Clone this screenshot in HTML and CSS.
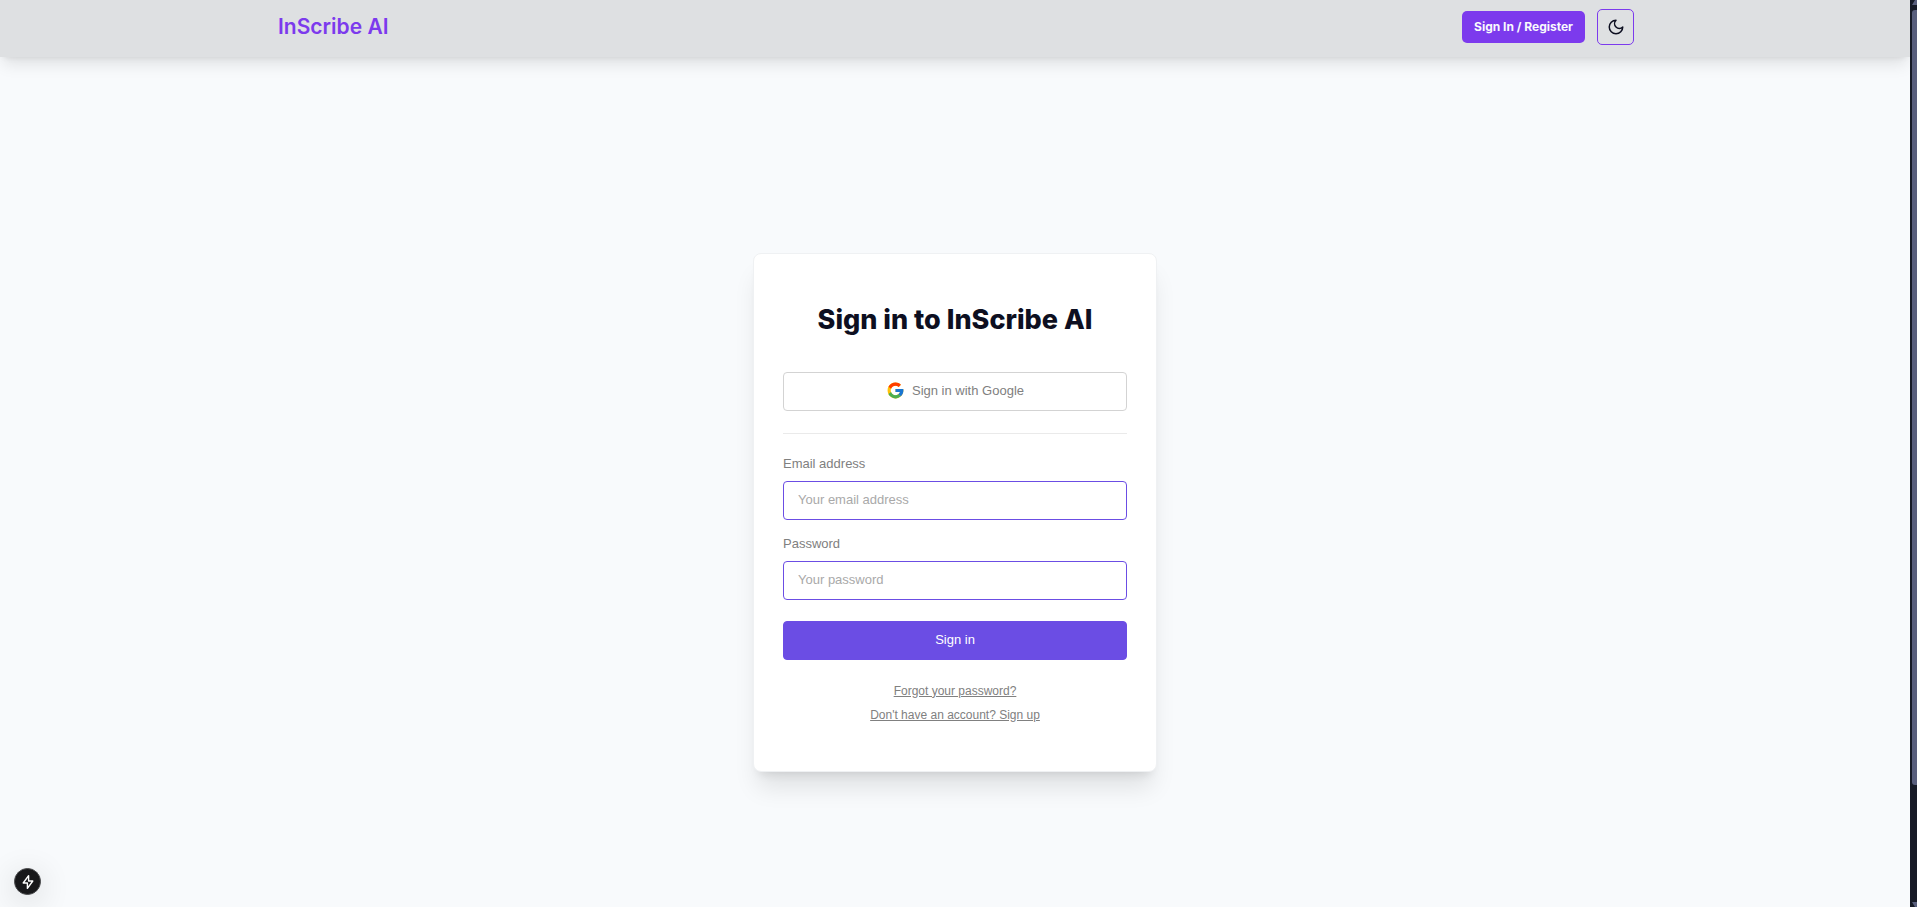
FILE: index.html
```html
<!DOCTYPE html>
<html lang="en">
<head>
<meta charset="utf-8">
<title>InScribe AI</title>
<link rel="stylesheet" href="styles.css">
</head>
<body>
<div class="page">
  <header class="header">
    <div class="header-inner">
      <a class="logo" href="#">InScribe AI</a>
      <nav class="actions">
        <a class="register" href="#">Sign In / Register</a>
        <button class="theme" type="button" aria-label="Toggle theme">
          <svg width="18" height="18" viewBox="0 0 24 24" fill="none" stroke="currentColor" stroke-width="2" stroke-linecap="round" stroke-linejoin="round"><path d="M12 3a6 6 0 0 0 9 9 9 9 0 1 1-9-9Z"/></svg>
        </button>
      </nav>
    </div>
  </header>
  <main class="main">
    <section class="card">
      <h1 class="title">Sign in to InScribe AI</h1>
      <form class="form">
        <button class="control google" type="button">
          <svg width="19" height="19" viewBox="0 0 48 48"><path fill="#FFC107" d="M43.611 20.083H42V20H24v8h11.303c-1.649 4.657-6.08 8-11.303 8-6.627 0-12-5.373-12-12s5.373-12 12-12c3.059 0 5.842 1.154 7.961 3.039l5.657-5.657C34.046 6.053 29.268 4 24 4 12.955 4 4 12.955 4 24s8.955 20 20 20 20-8.955 20-20c0-1.341-.138-2.65-.389-3.917z"/><path fill="#FF3D00" d="m6.306 14.691 6.571 4.819C14.655 15.108 18.961 12 24 12c3.059 0 5.842 1.154 7.961 3.039l5.657-5.657C34.046 6.053 29.268 4 24 4 16.318 4 9.656 8.337 6.306 14.691z"/><path fill="#4CAF50" d="M24 44c5.166 0 9.86-1.977 13.409-5.192l-6.19-5.238A11.91 11.91 0 0 1 24 36c-5.202 0-9.619-3.317-11.283-7.946l-6.522 5.025C9.505 39.556 16.227 44 24 44z"/><path fill="#1976D2" d="M43.611 20.083H42V20H24v8h11.303a12.04 12.04 0 0 1-4.087 5.571l6.193 5.238C36.971 39.205 44 34 44 24c0-1.341-.138-2.65-.389-3.917z"/></svg>
          Sign in with Google
        </button>
        <hr class="divider">
        <div class="field">
          <label for="email">Email address</label>
          <input class="control" id="email" type="email" placeholder="Your email address">
        </div>
        <div class="field">
          <label for="password">Password</label>
          <input class="control" id="password" type="password" placeholder="Your password">
        </div>
        <button class="control submit" type="submit">Sign in</button>
        <div class="links">
          <a href="#">Forgot your password?</a>
          <a href="#">Don't have an account? Sign up</a>
        </div>
      </form>
    </section>
  </main>
  <button class="devtools" type="button" aria-label="Open developer tools">
    <svg width="16" height="16" viewBox="0 0 16 16" fill="none" stroke="currentColor" stroke-width="1.4" stroke-linejoin="round"><path d="M8.6 1.6 3.2 9h4.2v5.4L12.8 7H8.6Z"/></svg>
  </button>
</div>
<div class="scrollbar" aria-hidden="true">
  <span class="arrow-up"></span>
  <span class="thumb"></span>
  <span class="arrow-down"></span>
</div>
</body>
</html>
```
FILE: styles.css
```css
* { box-sizing: border-box; }

body {
  margin: 0;
  min-height: 100vh;
  display: grid;
  grid-template-columns: 1fr 7px;
  background: #f8fafc;
  color: #0d0f21;
  font-family: Inter, sans-serif;
}

.page {
  display: flex;
  flex-direction: column;
  min-width: 0;
  overflow: hidden;
}

.header {
  padding: 9px 24px 12px 26px;
  background: #dee0e2;
  box-shadow: 0 10px 15px -3px rgb(0 0 0 / 10%), 0 4px 6px -4px rgb(0 0 0 / 10%);
}

.header-inner {
  display: flex;
  justify-content: space-between;
  align-items: center;
  max-width: 1356px;
  margin: 0 auto;
}

.logo {
  color: #7c3aed;
  font-size: 21px;
  line-height: 32px;
  font-weight: 600;
  text-decoration: none;
}

.actions {
  display: flex;
  align-items: center;
  gap: 12px;
}

.register {
  padding: 0 12px;
  border-radius: 5px;
  background: #7c3aed;
  color: #f8fafc;
  font-size: 12px;
  line-height: 32px;
  font-weight: 700;
  text-decoration: none;
}

.theme {
  display: grid;
  place-items: center;
  width: 37px;
  height: 36px;
  padding: 0;
  border: 1px solid #7c3aed;
  border-radius: 5px;
  background: none;
  color: #0d0f21;
}

.main {
  flex: 1;
  display: grid;
  place-items: center;
  padding: 88px 16px 28px;
}

.card {
  width: 100%;
  max-width: 404px;
  padding: 45px 29px 48px;
  border: 1px solid #eff1f3;
  border-radius: 8px;
  background: #fff;
  box-shadow: 0 20px 25px -5px rgb(0 0 0 / 10%), 0 8px 10px -6px rgb(0 0 0 / 10%);
}

.title {
  margin: 0 0 31px;
  font-size: 27px;
  line-height: 42px;
  font-weight: 800;
  text-align: center;
}

.form {
  font-family: "Liberation Sans", Arial, sans-serif;
  font-size: 13px;
  color: #808080;
}

.control {
  display: block;
  width: 100%;
  height: 39px;
  padding: 0 14px 2px;
  border: 1px solid #6b4de4;
  border-radius: 4px;
  background: #fff;
  font: inherit;
}

.control::placeholder { color: #a9a9a9; }

.google {
  display: flex;
  justify-content: center;
  align-items: center;
  gap: 7px;
  border-color: #d3d3d3;
  color: #808080;
}

.divider {
  height: 1px;
  margin: 22px 0 21px;
  border: 0;
  background: #eaeaea;
}

.field { margin-bottom: 15px; }

.field label {
  display: block;
  margin-bottom: 8px;
  line-height: 18px;
}

.submit {
  margin-top: 21px;
  background: #6b4de4;
  color: #fff;
}

.links {
  display: flex;
  flex-direction: column;
  align-items: center;
  gap: 8px;
  margin-top: 23px;
  font-size: 12px;
  line-height: 16px;
}

.links a { color: #808080; }

.devtools {
  position: fixed;
  left: 14px;
  bottom: 12px;
  display: grid;
  place-items: center;
  width: 27px;
  height: 27px;
  padding: 0;
  border: 1px solid #48494b;
  border-radius: 50%;
  background: #18181a;
  color: #fff;
  box-shadow: 0 6px 32px rgb(0 0 0 / 16%);
}

.scrollbar {
  display: flex;
  flex-direction: column;
  gap: 5px;
  padding-left: 2px;
  background: #161a26;
}

.thumb {
  flex: 0 0 85.5%;
  border-radius: 3px 0 0 3px;
  background: #585e7c;
}

.arrow-up,
.arrow-down {
  height: 5px;
  background: #585e7c;
}

.arrow-up { clip-path: polygon(60% 0, 100% 0, 100% 100%, 0 100%); }

.arrow-down {
  margin-top: auto;
  clip-path: polygon(0 0, 100% 0, 100% 100%, 60% 100%);
}
```
